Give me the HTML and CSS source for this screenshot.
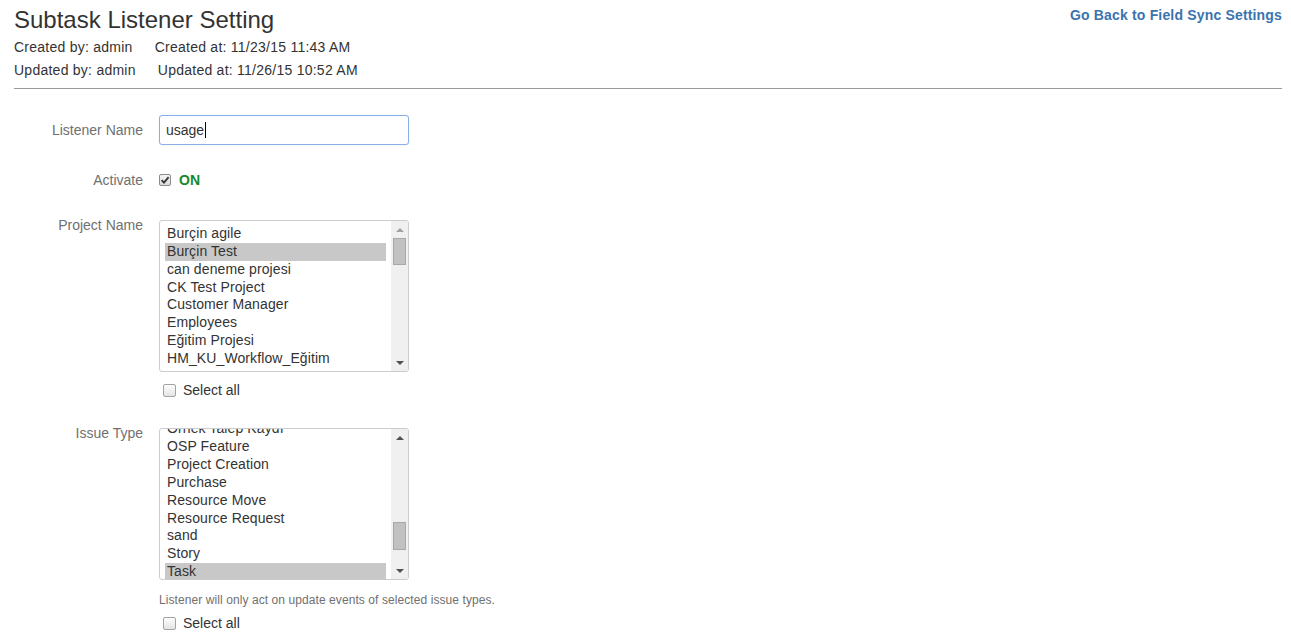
FILE: index.html
```html
<!DOCTYPE html>
<html lang="en">
<head>
<meta charset="utf-8">
<title>Subtask Listener Setting</title>
<link rel="stylesheet" href="styles.css">
</head>
<body>
<div class="page">
  <header class="header">
    <div class="head-main">
      <h1 class="title">Subtask Listener Setting</h1>
      <div class="meta">
        <div class="meta-line"><span>Created by: admin</span><span class="meta-at">Created at: 11/23/15 11:43 AM</span></div>
        <div class="meta-line"><span>Updated by: admin</span><span class="meta-at">Updated at: 11/26/15 10:52 AM</span></div>
      </div>
    </div>
    <a class="back-link" href="#">Go Back to Field Sync Settings</a>
  </header>
  <hr class="divider">
  <form class="form">
    <div class="field-group fg-name">
      <label class="field-label">Listener Name</label>
      <div class="field">
        <div class="text-input">usage<span class="caret"></span></div>
      </div>
    </div>

    <div class="field-group fg-activate">
      <label class="field-label">Activate</label>
      <div class="field check-line">
        <span class="cb cb-checked"><svg width="10" height="10" viewBox="0 0 10 10"><path d="M1.6 5.2 L4 7.6 L8.6 2.2" fill="none" stroke="#333" stroke-width="1.8"/></svg></span>
        <span class="on-label">ON</span>
      </div>
    </div>

    <div class="field-group fg-project">
      <label class="field-label">Project Name</label>
      <div class="field">
        <div class="listbox list-project">
          <div class="list-content">
            <div class="list-rows">
              <div class="list-row">Burçin agile</div>
              <div class="list-row selected">Burçin Test</div>
              <div class="list-row">can deneme projesi</div>
              <div class="list-row">CK Test Project</div>
              <div class="list-row">Customer Manager</div>
              <div class="list-row">Employees</div>
              <div class="list-row">Eğitim Projesi</div>
              <div class="list-row">HM_KU_Workflow_Eğitim</div>
              <div class="list-row">Human Resource Management</div>
            </div>
          </div>
          <div class="scrollbar">
            <div class="sb-btn"><span class="arrow-up arrow-disabled"></span></div>
            <div class="sb-track"><div class="thumb thumb-project"></div></div>
            <div class="sb-btn"><span class="arrow-down"></span></div>
          </div>
        </div>
        <div class="select-all">
          <span class="cb"></span><span>Select all</span>
        </div>
      </div>
    </div>

    <div class="field-group fg-issue">
      <label class="field-label">Issue Type</label>
      <div class="field">
        <div class="listbox list-issue">
          <div class="list-content">
            <div class="list-rows">
              <div class="list-row">Örnek Talep Kaydı</div>
              <div class="list-row">OSP Feature</div>
              <div class="list-row">Project Creation</div>
              <div class="list-row">Purchase</div>
              <div class="list-row">Resource Move</div>
              <div class="list-row">Resource Request</div>
              <div class="list-row">sand</div>
              <div class="list-row">Story</div>
              <div class="list-row selected">Task</div>
            </div>
          </div>
          <div class="scrollbar">
            <div class="sb-btn"><span class="arrow-up"></span></div>
            <div class="sb-track"><div class="thumb thumb-issue"></div></div>
            <div class="sb-btn"><span class="arrow-down"></span></div>
          </div>
        </div>
        <div class="help">Listener will only act on update events of selected issue types.</div>
        <div class="select-all select-all-2">
          <span class="cb"></span><span>Select all</span>
        </div>
      </div>
    </div>
  </form>
</div>
</body>
</html>
```
FILE: styles.css
```css
body {
  margin: 0;
  font-family: "Liberation Sans", Arial, sans-serif;
  font-size: 14px;
  color: #333;
  background: #fff;
}

.page {
  padding: 0 9px 0 14px;
}

.header {
  display: flex;
  justify-content: space-between;
  align-items: flex-start;
}

.title {
  margin: 6px 0 0;
  font-size: 24px;
  line-height: 28px;
  font-weight: normal;
  color: #333;
}

.meta {
  margin-top: 2px;
  line-height: 23px;
  letter-spacing: 0.25px;
}

.meta-at {
  margin-left: 22px;
}

.back-link {
  margin-top: 5px;
  line-height: 20px;
  font-weight: bold;
  color: #3b73af;
  text-decoration: none;
  letter-spacing: 0.17px;
}

.divider {
  margin: 6px 0 0;
  border: 0;
  border-top: 1px solid #9a9a9a;
  height: 0;
}

.form {
  padding-top: 26px;
}

.field-group {
  display: flex;
  align-items: flex-start;
}

.field-label {
  flex: none;
  width: 129px;
  margin-right: 16px;
  text-align: right;
  color: #707070;
  line-height: 20px;
}

.fg-name .field-label {
  padding-top: 5px;
}

.fg-activate {
  margin-top: 25px;
}

.fg-project {
  margin-top: 30px;
}

.fg-issue {
  margin-top: 28px;
}

.fg-project .field-label,
.fg-issue .field-label {
  margin-top: -5px;
}

.text-input {
  width: 250px;
  height: 30px;
  box-sizing: border-box;
  border: 1px solid #8aaee6;
  border-radius: 3px;
  box-shadow: 0 0 1px #a9c4ef;
  padding: 0 6px;
  display: flex;
  align-items: center;
  color: #333;
}

.caret {
  display: inline-block;
  width: 1px;
  height: 16px;
  background: #000;
  margin-left: 1px;
}

.check-line {
  display: flex;
  align-items: center;
  height: 20px;
}

.cb {
  flex: none;
  width: 13px;
  height: 13px;
  box-sizing: border-box;
  border: 1px solid #a3a3a3;
  border-radius: 2px;
  background: linear-gradient(#fdfdfd, #e4e4e4);
  display: flex;
  align-items: center;
  justify-content: center;
}

.cb-checked {
  width: 12px;
  height: 12px;
  border-color: #8c8c8c;
  background: linear-gradient(#f4f4f4, #dcdcdc);
}

.on-label {
  margin-left: 8px;
  font-weight: bold;
  color: #14892c;
}

.listbox {
  width: 250px;
  height: 152px;
  box-sizing: border-box;
  border: 1px solid #cccccc;
  border-radius: 3px;
  display: flex;
  overflow: hidden;
}

.list-content {
  flex: 1;
  overflow: hidden;
  padding: 4px 5px 0;
}

.list-issue .list-content {
  padding-top: 0;
}

.list-issue .list-rows {
  margin-top: -8.8px;
}

.list-row {
  height: 17.86px;
  line-height: 17.86px;
  padding-left: 2px;
  white-space: nowrap;
  color: #333;
  letter-spacing: 0.1px;
}

.list-row.selected {
  background: #c8c8c8;
}

.scrollbar {
  flex: none;
  width: 17px;
  background: #f0f0f0;
  display: flex;
  flex-direction: column;
}

.sb-btn {
  flex: none;
  height: 17px;
  display: flex;
  align-items: center;
  justify-content: center;
}

.sb-track {
  flex: 1;
}

.thumb {
  margin: 0 2px;
  box-sizing: border-box;
  border: 1px solid #a8a8a8;
  background: #c1c1c1;
}

.thumb-project {
  height: 27px;
}

.thumb-issue {
  height: 28px;
  margin-top: 76px;
}

.arrow-up {
  width: 0;
  height: 0;
  border-left: 4px solid transparent;
  border-right: 4px solid transparent;
  border-bottom: 4px solid #505050;
}

.arrow-up.arrow-disabled {
  border-bottom-color: #a3a3a3;
}

.arrow-down {
  width: 0;
  height: 0;
  border-left: 4px solid transparent;
  border-right: 4px solid transparent;
  border-top: 4px solid #505050;
}

.select-all {
  margin-top: 8px;
  height: 20px;
  display: flex;
  align-items: center;
  color: #333;
}

.select-all .cb {
  margin-left: 4px;
  margin-right: 7px;
}

.help {
  margin-top: 12px;
  font-size: 12px;
  line-height: 16px;
  color: #707070;
  letter-spacing: 0.08px;
}

.select-all-2 {
  margin-top: 5px;
}
```
